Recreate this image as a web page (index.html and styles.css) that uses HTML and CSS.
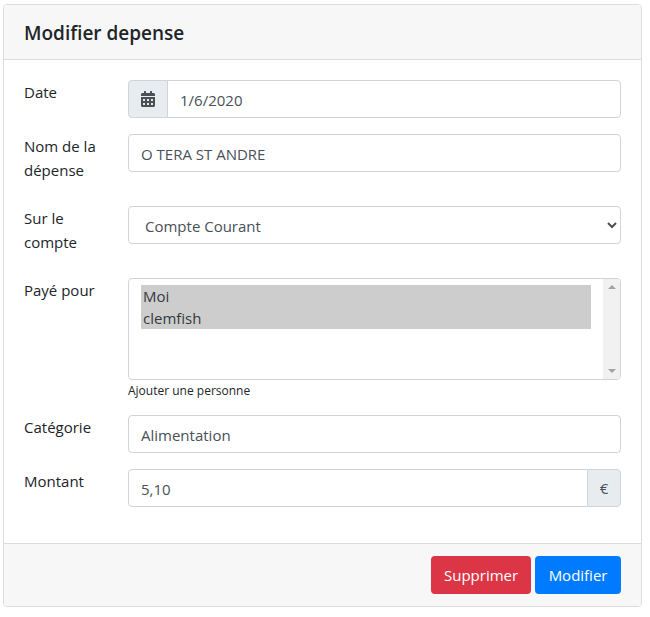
FILE: index.html
```html
<!DOCTYPE html>
<html lang="fr">
<head>
<meta charset="utf-8">
<title>Modifier depense</title>
<link rel="stylesheet" href="styles.css">
</head>
<body>
<form class="card">
  <header class="card-header"><h5 class="card-title">Modifier depense</h5></header>
  <div class="card-body">
    <div class="row">
      <label class="row-label">Date</label>
      <div class="row-control input-group">
        <span class="addon addon-left">
          <svg class="icon" viewBox="0 0 448 512" aria-hidden="true"><path fill="currentColor" d="M0 464c0 26.5 21.5 48 48 48h352c26.5 0 48-21.5 48-48V192H0v272zm320-196c0-6.6 5.4-12 12-12h40c6.6 0 12 5.4 12 12v40c0 6.6-5.4 12-12 12h-40c-6.6 0-12-5.4-12-12v-40zm0 128c0-6.6 5.4-12 12-12h40c6.6 0 12 5.4 12 12v40c0 6.6-5.4 12-12 12h-40c-6.6 0-12-5.4-12-12v-40zM192 268c0-6.6 5.4-12 12-12h40c6.6 0 12 5.4 12 12v40c0 6.6-5.4 12-12 12h-40c-6.6 0-12-5.4-12-12v-40zm0 128c0-6.6 5.4-12 12-12h40c6.6 0 12 5.4 12 12v40c0 6.6-5.4 12-12 12h-40c-6.6 0-12-5.4-12-12v-40zM64 268c0-6.6 5.4-12 12-12h40c6.6 0 12 5.4 12 12v40c0 6.6-5.4 12-12 12H76c-6.6 0-12-5.4-12-12v-40zm0 128c0-6.6 5.4-12 12-12h40c6.6 0 12 5.4 12 12v40c0 6.6-5.4 12-12 12H76c-6.6 0-12-5.4-12-12v-40zM400 64h-48V16c0-8.8-7.2-16-16-16h-32c-8.8 0-16 7.2-16 16v48H160V16c0-8.8-7.2-16-16-16h-32c-8.8 0-16 7.2-16 16v48H48C21.5 64 0 85.5 0 112v48h448v-48c0-26.5-21.5-48-48-48z"/></svg>
        </span>
        <input class="field field-joined-left" type="text" value="1/6/2020">
      </div>
    </div>
    <div class="row">
      <label class="row-label">Nom de la dépense</label>
      <div class="row-control"><input class="field" type="text" value="O TERA ST ANDRE"></div>
    </div>
    <div class="row">
      <label class="row-label">Sur le compte</label>
      <div class="row-control">
        <select class="field">
          <option>Compte Courant</option>
        </select>
      </div>
    </div>
    <div class="row">
      <label class="row-label">Payé pour</label>
      <div class="row-control">
        <div class="listbox">
          <div class="listbox-options" role="listbox" aria-multiselectable="true">
            <div class="listbox-option" role="option" aria-selected="true">Moi</div>
            <div class="listbox-option" role="option" aria-selected="true">clemfish</div>
          </div>
          <div class="scroll-rail" aria-hidden="true">
            <span class="arrow arrow-up"></span>
            <span class="arrow arrow-down"></span>
          </div>
        </div>
        <small class="hint">Ajouter une personne</small>
      </div>
    </div>
    <div class="row">
      <label class="row-label">Catégorie</label>
      <div class="row-control"><input class="field" type="text" value="Alimentation"></div>
    </div>
    <div class="row">
      <label class="row-label">Montant</label>
      <div class="row-control input-group">
        <input class="field field-joined-right" type="text" value="5,10">
        <span class="addon addon-right">€</span>
      </div>
    </div>
  </div>
  <footer class="card-footer">
    <button class="btn btn-danger" type="button">Supprimer</button>
    <button class="btn btn-primary" type="button">Modifier</button>
  </footer>
</form>
</body>
</html>
```
FILE: styles.css
```css
* { box-sizing: border-box; }

html, body { margin: 0; background: #fff; }

body {
  padding: 4px 8px 10px 3px;
  font-family: "Open Sans", "Noto Sans", "Liberation Sans", sans-serif;
  font-size: 15px;
  line-height: 24px;
  color: #212529;
}

.card {
  display: flex;
  flex-direction: column;
  border: 1px solid #dcdcdc;
  border-radius: 4px;
  background: #fff;
}

.card-header {
  padding: 13px 20px 11px;
  background: #f7f7f7;
  border-bottom: 1px solid #dcdcdc;
  border-radius: 3px 3px 0 0;
}

.card-title {
  margin: 0;
  font-size: 19px;
  font-weight: 600;
  line-height: 30px;
}

.card-body { padding: 20px 20px 20px; }

.row { display: flex; margin-bottom: 16px; }

.row-label { width: 104px; flex: none; margin-bottom: 8px; padding-right: 8px; }

.row-control { flex: 1; min-width: 0; }

.input-group { display: flex; }

.field {
  display: block;
  width: 100%;
  height: 38px;
  padding: 7px 12px 5px;
  font: inherit;
  color: #495057;
  background: #fff;
  border: 1px solid #ced4da;
  border-radius: 4px;
  outline: none;
}

.field-joined-left { flex: 1; min-width: 0; border-radius: 0 4px 4px 0; }

.field-joined-right { flex: 1; min-width: 0; border-radius: 4px 0 0 4px; }

.listbox {
  display: flex;
  height: 102px;
  overflow: hidden;
  color: #343a40;
  background: #fff;
  border: 1px solid #ced4da;
  border-radius: 4px;
}

.listbox-options { flex: 1; min-width: 0; padding: 6px 12px; }

.listbox-option {
  height: 22px;
  padding: 1px 2px 0;
  line-height: 21px;
  background: #cdcdcd;
}

.scroll-rail {
  display: flex;
  flex: none;
  flex-direction: column;
  align-items: center;
  justify-content: space-between;
  width: 17px;
  padding: 6px 0;
  background: #f1f1f1;
}

.arrow {
  width: 0;
  height: 0;
  border-left: 4px solid transparent;
  border-right: 4px solid transparent;
}

.arrow-up { border-bottom: 4px solid #a3a3a3; }

.arrow-down { border-top: 4px solid #a3a3a3; }

.hint { display: block; padding-top: 2px; font-size: 12px; line-height: 17px; color: #212529; }

.addon {
  display: flex;
  align-items: center;
  justify-content: center;
  flex: none;
  color: #495057;
  background: #e9ecef;
  border: 1px solid #ced4da;
}

.addon-left { width: 40px; margin-right: -1px; border-radius: 4px 0 0 4px; }

.addon-right { width: 34px; margin-left: -1px; border-radius: 0 4px 4px 0; }

.icon { width: 14px; height: 16px; display: block; }

.card-footer {
  display: flex;
  justify-content: flex-end;
  gap: 4px;
  padding: 12px 20px;
  background: #f7f7f7;
  border-top: 1px solid #dcdcdc;
  border-radius: 0 0 3px 3px;
}

.btn {
  height: 38px;
  padding: 6px 12px;
  font: inherit;
  color: #fff;
  border: 1px solid transparent;
  border-radius: 4px;
}

.btn-danger { background: #dc3545; }

.btn-primary { padding: 6px 12.5px; background: #007bff; }
```
